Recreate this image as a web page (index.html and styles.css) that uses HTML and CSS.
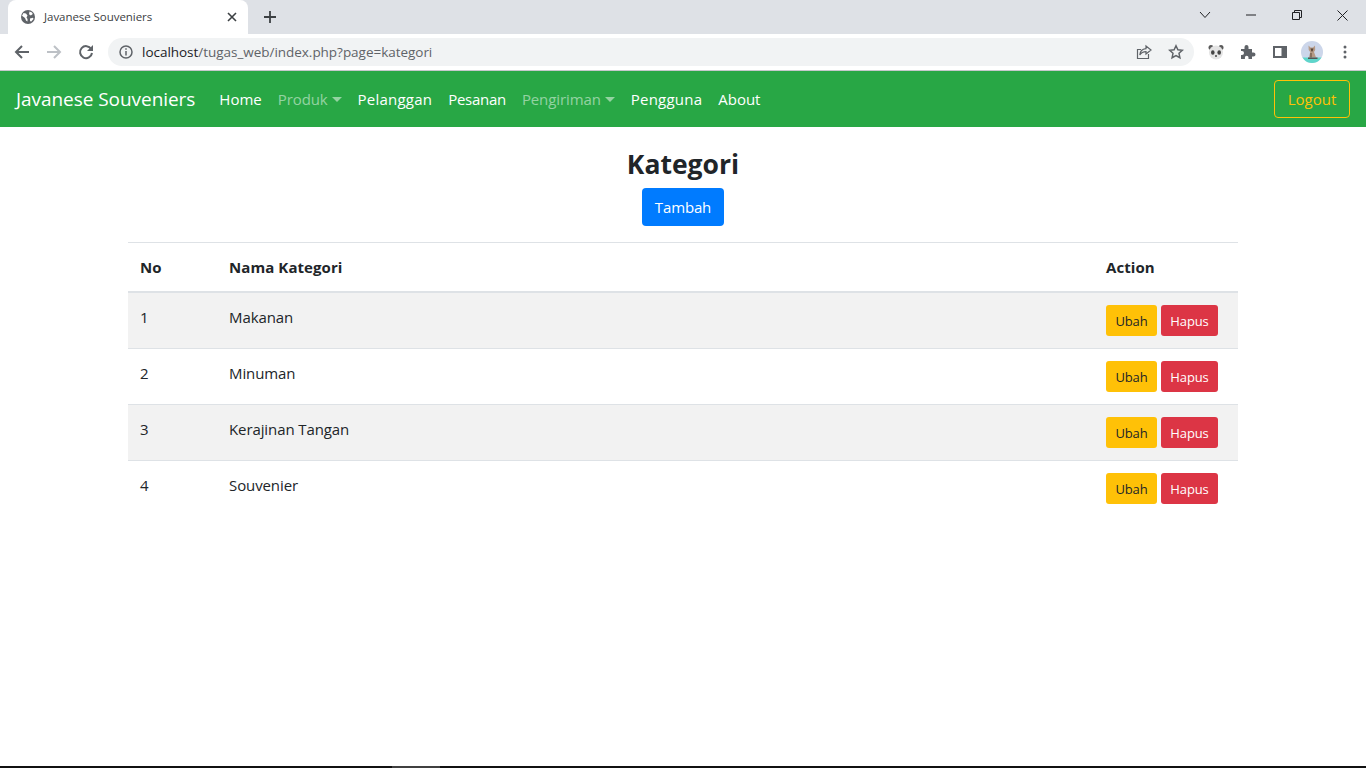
FILE: index.html
```html
<!DOCTYPE html>
<html>
<head>
<meta charset="utf-8">
<title>Javanese Souveniers</title>
<link rel="stylesheet" href="styles.css">
</head>
<body>
  <!-- browser chrome -->
  <div class="tabstrip">
    <div class="tab">
      <svg class="tab-globe" width="16" height="16" viewBox="0 0 16 16"><circle cx="8" cy="8" r="7" fill="#5f6368"/><path d="M3.500 4l2.500.5 1.500 2-1 2 1 1.500v2.500l-1.500-1-1-2.500-3-2.200zM9.500 2.500l2.500 1 .8 1.500-2 1.500-1.800-1.200zM10 9.500l3-.8.500 1.300-2.500 2.700-1-1z" fill="#fff"/></svg>
      <span class="tab-title">Javanese Souveniers</span>
      <svg class="tab-close" width="10" height="10" viewBox="0 0 10 10"><path d="M1 1l8 8M9 1l-8 8" stroke="#3c4043" stroke-width="1.600"/></svg>
    </div>
    <svg class="new-tab" width="14" height="14" viewBox="0 0 14 14"><path d="M7 1v12M1 7h12" stroke="#3c4043" stroke-width="1.800"/></svg>
    <div class="win-controls">
      <svg class="win-chevron" width="12" height="8" viewBox="0 0 12 8"><path d="M1 1l5 5.500L11 1" fill="none" stroke="#202124" stroke-width="1"/></svg>
      <svg class="win-min" width="10" height="2" viewBox="0 0 10 2"><path d="M0 1h10" stroke="#202124" stroke-width="1"/></svg>
      <svg class="win-max" width="10" height="10" viewBox="0 0 10 10"><path d="M.5 2.500h7v7h-7zM2.500 2.500v-2h7v7h-2" fill="none" stroke="#202124" stroke-width="1"/></svg>
      <svg class="win-close" width="11" height="11" viewBox="0 0 11 11"><path d="M.5.5l10 10M10.500.5l-10 10" stroke="#202124" stroke-width="1"/></svg>
    </div>
  </div>
  <div class="toolbar">
    <svg class="tb-back" width="16" height="16" viewBox="0 0 16 16"><path d="M15 8H2M8 2L2 8l6 6" fill="none" stroke="#5f6368" stroke-width="2"/></svg>
    <svg class="tb-forward" width="16" height="16" viewBox="0 0 16 16"><path d="M1 8h13M8 2l6 6-6 6" fill="none" stroke="#bdc1c6" stroke-width="2"/></svg>
    <svg class="tb-reload" width="16" height="16" viewBox="0 0 16 16"><path d="M13.200 5A6 6 0 1 0 14 9" fill="none" stroke="#5f6368" stroke-width="2"/><path d="M15 1v6H9z" fill="#5f6368"/></svg>
    <div class="omnibox">
      <svg width="14" height="14" viewBox="0 0 14 14"><circle cx="7" cy="7" r="6" fill="none" stroke="#5f6368" stroke-width="1.500"/><path d="M7 6v4.500M7 3.200v1.600" stroke="#5f6368" stroke-width="1.500"/></svg>
      <span class="url"><span class="url-host">localhost</span>/tugas_web/index.php?page=kategori</span>
      <svg class="omni-share" width="16" height="16" viewBox="0 0 16 16"><path d="M10 2l5 4-5 4V7.700C6.500 7.700 5 9 3.800 11 4 7.500 6 5 10 4.600zM12.500 10v4.500h-11V5.500H5" fill="none" stroke="#5f6368" stroke-width="1.200"/></svg>
      <svg class="omni-star" width="16" height="16" viewBox="0 0 16 16"><path d="M8 1.800l1.900 4 4.400.5-3.300 3 .9 4.400L8 11.500l-3.900 2.200.9-4.400-3.300-3 4.400-.5z" fill="none" stroke="#5f6368" stroke-width="1.500"/></svg>
    </div>
    <svg class="ext-panda" width="16" height="16" viewBox="0 0 16 16"><circle cx="3" cy="3.500" r="2.500" fill="#5a5a5a"/><circle cx="13" cy="3.500" r="2.500" fill="#5a5a5a"/><circle cx="8" cy="8.500" r="7" fill="#e4e4e4"/><ellipse cx="4.800" cy="8.500" rx="1.800" ry="2.200" fill="#444"/><ellipse cx="11.200" cy="8.500" rx="1.800" ry="2.200" fill="#444"/><circle cx="8" cy="12" r="1" fill="#444"/></svg>
    <svg class="ext-puzzle" width="16" height="16" viewBox="0 0 16 16"><path d="M1 5h3.500V3a2 2 0 0 1 4 0v2H12v3.500h1.500a2 2 0 0 1 0 4H12V15H8.500v-1.500a1.800 1.800 0 0 0-3.600 0V15H1v-4h1a2 2 0 0 0 0-4H1z" fill="#5f6368"/></svg>
    <svg class="ext-panel" width="14" height="12" viewBox="0 0 14 12"><path d="M0 0h14v12H0z" fill="#5f6368"/><path d="M2 2h6.500v8H2z" fill="#fff"/></svg>
    <svg class="avatar" width="22" height="22" viewBox="0 0 22 22"><defs><clipPath id="av"><circle cx="11" cy="11" r="11"/></clipPath></defs><g clip-path="url(#av)"><path d="M0 0h22v22H0z" fill="#ccd6ea"/><path d="M0 16.500h22V22H0z" fill="#5ed6cb"/><path d="M7.500 4.500l2 2h2.500l2-2 .2 4.500-1.200 2 2 5.500H8l1.200-5.500-1.500-2z" fill="#b59a86"/><path d="M9.500 7.500h3l-1 3h-1zM9.500 12h1v4.500h-1z" fill="#5b4638"/><path d="M7 16.500h9.500V18H7z" fill="#555"/></g></svg>
    <svg class="kebab" width="4" height="14" viewBox="0 0 4 14"><circle cx="2" cy="2" r="1.500" fill="#5f6368"/><circle cx="2" cy="7" r="1.500" fill="#5f6368"/><circle cx="2" cy="12" r="1.500" fill="#5f6368"/></svg>
  </div>

  <!-- page -->
  <nav class="navbar">
    <a class="brand">Javanese Souveniers</a>
    <ul class="nav-list">
      <li><a class="nav-link">Home</a></li>
      <li><a class="nav-link muted caret">Produk</a></li>
      <li><a class="nav-link wide">Pelanggan</a></li>
      <li><a class="nav-link narrow">Pesanan</a></li>
      <li><a class="nav-link muted caret">Pengiriman</a></li>
      <li><a class="nav-link wide">Pengguna</a></li>
      <li><a class="nav-link">About</a></li>
    </ul>
    <a class="btn btn-logout">Logout</a>
  </nav>

  <div class="container">
    <h2 class="title">Kategori</h2>
    <div class="center"><a class="btn btn-blue">Tambah</a></div>
    <table class="table">
      <colgroup><col class="col-no"><col class="col-name"><col class="col-action"></colgroup>
      <thead>
        <tr><th>No</th><th>Nama Kategori</th><th>Action</th></tr>
      </thead>
      <tbody>
        <tr>
          <td>1</td><td>Makanan</td>
          <td><div class="actions"><a class="btn-sm yellow">Ubah</a><a class="btn-sm red">Hapus</a></div></td>
        </tr>
        <tr>
          <td>2</td><td>Minuman</td>
          <td><div class="actions"><a class="btn-sm yellow">Ubah</a><a class="btn-sm red">Hapus</a></div></td>
        </tr>
        <tr>
          <td>3</td><td>Kerajinan Tangan</td>
          <td><div class="actions"><a class="btn-sm yellow">Ubah</a><a class="btn-sm red">Hapus</a></div></td>
        </tr>
        <tr>
          <td>4</td><td>Souvenier</td>
          <td><div class="actions"><a class="btn-sm yellow">Ubah</a><a class="btn-sm red">Hapus</a></div></td>
        </tr>
      </tbody>
    </table>
  </div>

  <div class="screen-edge"><div class="edge-thumb"></div></div>
</body>
</html>
```

FILE: styles.css
```css
* {
    box-sizing: border-box;
}

html, body {
    height: 100%;
}

body {
    margin: 0;
    display: flex;
    flex-direction: column;
    overflow: hidden;
    background: #fff;
    color: #212529;
    font-family: "Open Sans", "Noto Sans", sans-serif;
    font-size: 15px;
    line-height: 24px;
}

/* browser chrome */
.tabstrip {
    height: 34px;
    flex: none;
    background: #dee1e6;
    display: flex;
    align-items: center;
    padding-left: 8px;
}

.tab {
    width: 240px;
    height: 34px;
    background: #fff;
    border-radius: 8px 8px 0 0;
    display: flex;
    align-items: center;
    padding: 0 11px 0 12px;
}

.tab-globe {
    flex: none;
}

.tab-title {
    flex: 1;
    margin-left: 8px;
    font-size: 11.500px;
    color: #3c4043;
    letter-spacing: -0.05px;
}

.new-tab {
    margin-left: 15px;
}

.win-controls {
    margin-left: auto;
    display: flex;
    align-items: center;
    height: 30px;
    margin-top: -4px;
}

.win-chevron { margin-right: 35px; }
.win-min { margin-right: 36px; }
.win-max { margin-right: 35px; }
.win-close { margin-right: 18px; }

.toolbar {
    height: 37px;
    flex: none;
    background: #fff;
    border-bottom: 1px solid #c6c8cc;
    display: flex;
    align-items: center;
    padding: 0 14px 1px 14px;
}

.tb-forward { margin-left: 16px; }
.tb-reload { margin-left: 16px; }

.omnibox {
    margin-left: 14px;
    width: 1086px;
    height: 28px;
    border-radius: 14px;
    background: #f1f3f4;
    display: flex;
    align-items: center;
    padding: 0 10px 0 11px;
    font-size: 13.500px;
    color: #5f6368;
}

.url {
    flex: 1;
    margin-left: 9px;
    letter-spacing: -0.03px;
}

.url-host {
    color: #202124;
}

.omni-star { margin-left: 16px; }

.ext-panda { margin-left: 14px; }
.ext-puzzle { margin-left: 16px; }
.ext-panel { margin-left: 17px; }
.avatar { margin-left: 14px; }
.kebab { margin-left: 20px; }

/* navbar */
.navbar {
    height: 56px;
    flex: none;
    background: #28a745;
    display: flex;
    align-items: center;
    padding: 0 16px;
}

.brand {
    font-size: 19px;
    letter-spacing: -0.05px;
    color: #fff;
    margin-right: 16px;
}

.nav-list {
    list-style: none;
    margin: 0;
    padding: 0;
    display: flex;
}

.nav-link {
    display: block;
    padding: 8px;
    color: #fff;
}

.wide {
    letter-spacing: 0.22px;
}

.narrow {
    letter-spacing: -0.28px;
}

.muted {
    color: rgba(255, 255, 255, .5);
}

.caret {
    letter-spacing: -0.1px;
}

.caret::after {
    content: "";
    display: inline-block;
    margin-left: 4px;
    vertical-align: 3px;
    border-top: 5px solid;
    border-left: 5px solid transparent;
    border-right: 5px solid transparent;
}

.btn {
    display: inline-block;
    height: 38px;
    padding: 6px 12px;
    border-radius: 4px;
    border: 1px solid transparent;
}

.btn-logout {
    margin-left: auto;
    width: 76px;
    text-align: center;
    padding: 6px 0;
    color: #ffc107;
    border-color: #ffc107;
}

.btn-blue {
    width: 82px;
    text-align: center;
    padding: 6px 0;
    letter-spacing: -0.15px;
    background: #007bff;
    color: #fff;
}

/* content */
.container {
    width: 1110px;
    margin: 0 auto;
    flex: 1;
}

.title {
    margin: 17px 0 4px;
    text-align: center;
    font-size: 26.500px;
    line-height: 40px;
    font-weight: 700;
}

.center {
    text-align: center;
    margin-bottom: 16px;
}

.table {
    width: 100%;
    table-layout: fixed;
    border-collapse: collapse;
}

.col-no { width: 89px; }
.col-action { width: 144px; }

.table th, .table td {
    padding: 12px;
    text-align: left;
    vertical-align: top;
    border-top: 1px solid #dee2e6;
}

.table th {
    border-bottom: 2px solid #dee2e6;
    font-weight: 700;
    letter-spacing: 0.08px;
}

.table td {
    letter-spacing: -0.1px;
}

.table tbody tr:nth-child(odd) {
    background: #f2f2f2;
}

.table tbody tr:first-child td {
    border-top: 0;
}

.actions {
    display: flex;
    gap: 4px;
}

.btn-sm {
    display: block;
    width: 51px;
    height: 31px;
    padding: 5px 0 3px;
    text-align: center;
    font-size: 13px;
    line-height: 21px;
    border-radius: 3px;
    border: 1px solid transparent;
}

.yellow {
    background: #ffc107;
    color: #212529;
}

.red {
    width: 57px;
    background: #dc3545;
    color: #fff;
}

/* bottom edge of the screen */
.screen-edge {
    height: 2px;
    flex: none;
    background: #111;
    padding-left: 392px;
}

.edge-thumb {
    width: 48px;
    height: 2px;
    background: #404040;
}
```
